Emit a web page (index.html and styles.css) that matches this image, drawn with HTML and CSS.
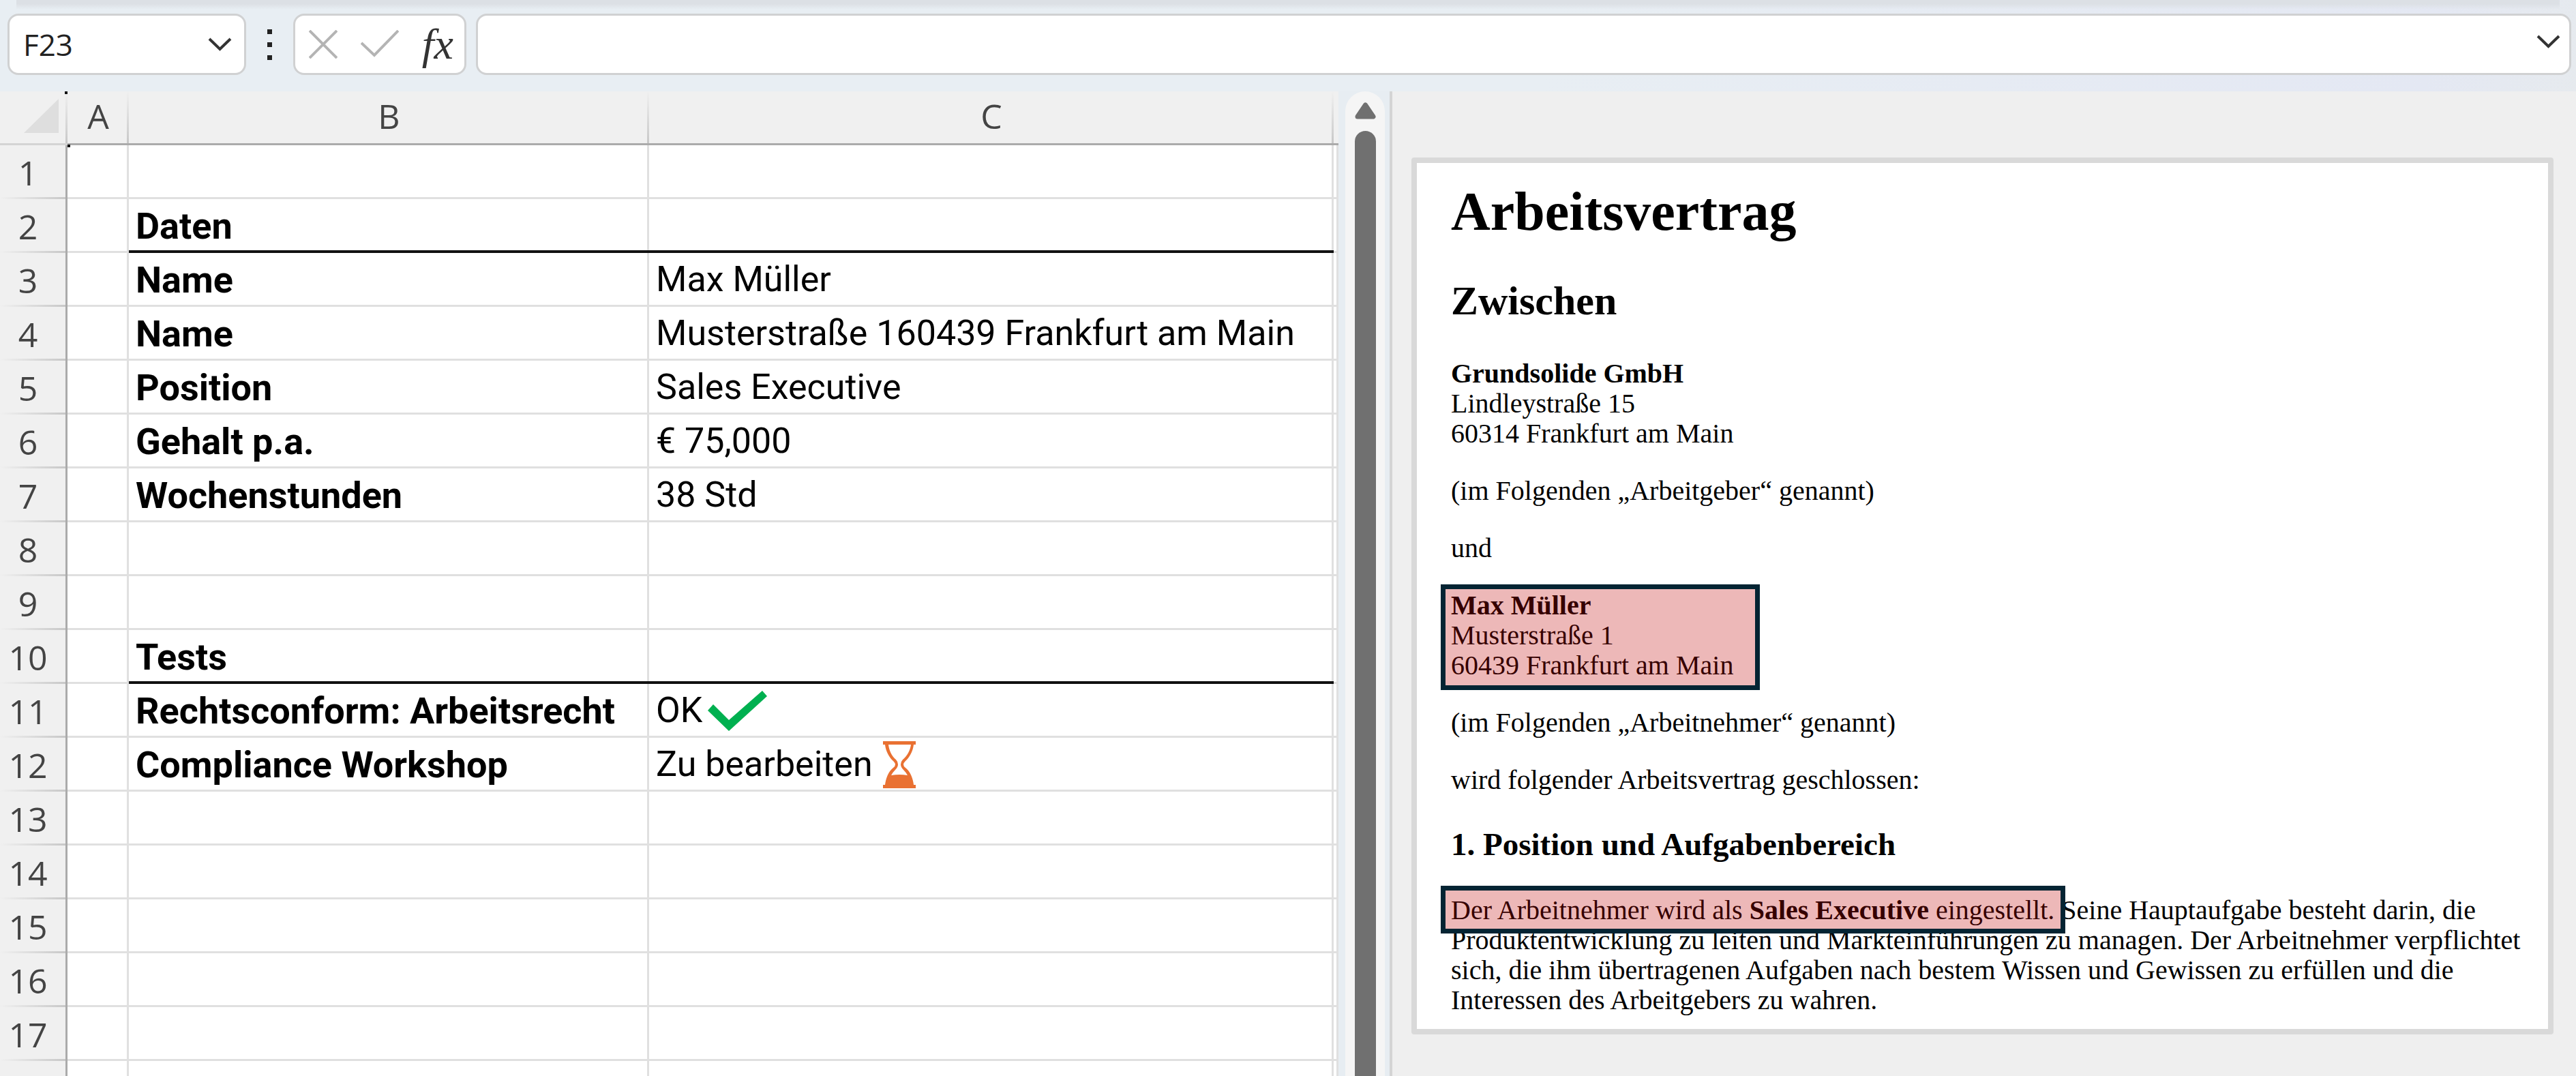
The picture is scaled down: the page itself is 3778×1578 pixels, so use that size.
FILE: index.html
```html
<!DOCTYPE html>
<html lang="de">
<head>
<meta charset="utf-8">
<title>Arbeitsvertrag</title>
<link rel="stylesheet" href="styles.css">
</head>
<body>
<header class="formula-bar">
  <div class="field name-box">
    <input class="name-input" type="text" value="F23" aria-label="Namenfeld">
    <button class="icon-button" type="button" aria-label="Namen anzeigen">
      <svg width="35" height="20" viewBox="0 0 35 20"><path d="M2 2 17.500 17 33 2" fill="none" stroke="#333" stroke-width="4"/></svg>
    </button>
  </div>
  <div class="grip" aria-hidden="true"><i></i><i></i><i></i></div>
  <div class="field actions">
    <button class="icon-button" type="button" aria-label="Abbrechen">
      <svg width="42" height="42" viewBox="0 0 42 42"><path d="M1 1 41 41M41 1 1 41" fill="none" stroke="#b4b4b4" stroke-width="4"/></svg>
    </button>
    <button class="icon-button" type="button" aria-label="Eingeben">
      <svg width="56" height="42" viewBox="0 0 56 42"><path d="M1 19 20 37 55 1" fill="none" stroke="#b4b4b4" stroke-width="4"/></svg>
    </button>
    <button class="icon-button fx" type="button" aria-label="Funktion einfügen">fx</button>
  </div>
  <div class="field formula">
    <input class="formula-input" type="text" aria-label="Bearbeitungsleiste">
    <button class="icon-button expand" type="button" aria-label="Bearbeitungsleiste erweitern">
      <svg width="35" height="20" viewBox="0 0 35 20"><path d="M2 2 17.500 17 33 2" fill="none" stroke="#333" stroke-width="4"/></svg>
    </button>
  </div>
</header>

<main class="workspace">
  <table class="sheet">
    <colgroup><col class="col-head"><col class="col-a"><col class="col-b"><col class="col-c"><col></colgroup>
    <thead>
      <tr>
        <th class="corner"><svg width="51" height="50" viewBox="0 0 51 50"><path d="M51 0V50H0Z" fill="#dedede"/></svg></th>
        <th scope="col">A</th><th scope="col">B</th><th scope="col">C</th><th class="last"></th>
      </tr>
    </thead>
    <tbody>
      <tr><th scope="row">1</th><td></td><td></td><td></td><td></td></tr>
      <tr class="section"><th scope="row">2</th><td></td><td>Daten</td><td></td><td></td></tr>
      <tr><th scope="row">3</th><td></td><td>Name</td><td>Max Müller</td><td></td></tr>
      <tr><th scope="row">4</th><td></td><td>Name</td><td>Musterstraße 160439 Frankfurt am Main</td><td></td></tr>
      <tr><th scope="row">5</th><td></td><td>Position</td><td>Sales Executive</td><td></td></tr>
      <tr><th scope="row">6</th><td></td><td>Gehalt p.a.</td><td>€ 75,000</td><td></td></tr>
      <tr><th scope="row">7</th><td></td><td>Wochenstunden</td><td>38 Std</td><td></td></tr>
      <tr><th scope="row">8</th><td></td><td></td><td></td><td></td></tr>
      <tr><th scope="row">9</th><td></td><td></td><td></td><td></td></tr>
      <tr class="section"><th scope="row">10</th><td></td><td>Tests</td><td></td><td></td></tr>
      <tr><th scope="row">11</th><td></td><td>Rechtsconform: Arbeitsrecht</td><td><div class="status done">OK
        <svg width="87" height="59" viewBox="0 0 87 59" aria-hidden="true"><path d="M0 29 8 20 31 43 80 0 87 8 31 59Z" fill="#00b050"/></svg></div></td><td></td></tr>
      <tr><th scope="row">12</th><td></td><td>Compliance Workshop</td><td><div class="status open">Zu bearbeiten
        <svg width="48" height="69" viewBox="0 0 48 69" aria-hidden="true">
          <path d="M0 0H48V5H45C44 15 38 25 33 29Q30 32 30 34Q30 37 33 39C40 44 44 55 45 64H48V69H0V64H3C4 55 8 44 15 39Q18 37 18 34Q18 32 15 29C10 25 4 15 3 5H0Z" fill="#e97132"/>
          <path d="M8 5H41C40 14 35 22 29 27Q26 30 26 34Q26 38 30 42Q34 46 36 50Q24 48 12 50Q14 46 18 42Q22 38 22 34Q22 30 19 27C13 22 9 14 8 5Z" fill="#fff"/>
        </svg></div></td><td></td></tr>
      <tr><th scope="row">13</th><td></td><td></td><td></td><td></td></tr>
      <tr><th scope="row">14</th><td></td><td></td><td></td><td></td></tr>
      <tr><th scope="row">15</th><td></td><td></td><td></td><td></td></tr>
      <tr><th scope="row">16</th><td></td><td></td><td></td><td></td></tr>
      <tr><th scope="row">17</th><td></td><td></td><td></td><td></td></tr>
      <tr><th scope="row">18</th><td></td><td></td><td></td><td></td></tr>
    </tbody>
  </table>

  <div class="scroll-column">
    <div class="scroll-track">
      <button class="icon-button" type="button" aria-label="Nach oben">
        <svg width="31" height="25" viewBox="0 0 31 25"><path d="M15.500 4 27 21H4Z" fill="#707070" stroke="#707070" stroke-width="7" stroke-linejoin="round"/></svg>
      </button>
      <div class="scroll-thumb"></div>
    </div>
  </div>

  <section class="panel">
    <article class="document">
      <h1>Arbeitsvertrag</h1>
      <h2>Zwischen</h2>
      <p><strong>Grundsolide GmbH</strong><br>Lindleystraße 15<br>60314 Frankfurt am Main</p>
      <p>(im Folgenden „Arbeitgeber“ genannt)</p>
      <p>und</p>
      <p class="marked-block"><strong>Max Müller</strong><br>Musterstraße 1<br>60439 Frankfurt am Main</p>
      <p>(im Folgenden „Arbeitnehmer“ genannt)</p>
      <p>wird folgender Arbeitsvertrag geschlossen:</p>
      <h3>1. Position und Aufgabenbereich</h3>
      <p><span class="marked-text">Der Arbeitnehmer wird als <strong>Sales Executive</strong> eingestellt.</span> Seine Hauptaufgabe besteht darin, die Produktentwicklung zu leiten und Markteinführungen zu managen. Der Arbeitnehmer verpflichtet sich, die ihm übertragenen Aufgaben nach bestem Wissen und Gewissen zu erfüllen und die Interessen des Arbeitgebers zu wahren.</p>
    </article>
  </section>
</main>
</body>
</html>
```
FILE: styles.css
```css
*,
*::before,
*::after { box-sizing: border-box; }

body {
  margin: 0;
  height: 100vh;
  overflow: hidden;
  display: flex;
  flex-direction: column;
  background: #e7edf2;
  font-family: "Open Sans", "Noto Sans", sans-serif;
  color: #000;
}

svg { display: block; flex: none; }

.icon-button {
  display: flex;
  align-items: center;
  justify-content: center;
  flex: none;
  margin: 0;
  padding: 0;
  border: 0;
  background: none;
}

/* Formula bar */
.formula-bar {
  position: relative;
  flex: none;
  display: flex;
  align-items: center;
  height: 134px;
  padding: 20px 7px 24px 11px;
  background: linear-gradient(100deg, #e8eef3 60%, #e4e8f3 94%, #e6eaee);
}

.formula-bar::before {
  content: "";
  position: absolute;
  top: 0;
  left: 24px;
  right: 24px;
  height: 14px;
  background: linear-gradient(#dce0e5 40%, transparent);
}

.field {
  display: flex;
  align-items: center;
  height: 90px;
  border: 3px solid #d0d1d2;
  border-radius: 16px;
  background: #fff;
}

.name-box { width: 350px; padding: 0 18px 0 20px; }

.name-input,
.formula-input {
  flex: 1;
  min-width: 0;
  height: 100%;
  padding: 0;
  border: 0;
  outline: 0;
  background: none;
  font: 44px/60px "Open Sans", "Noto Sans", sans-serif;
  color: #222;
}

.grip {
  display: flex;
  flex-direction: column;
  gap: 12px;
  margin: 0 31px;
}

.grip i { width: 7px; height: 7px; background: #222; }

.actions { width: 254px; padding: 0 16px 0 20px; justify-content: space-between; }

.fx {
  font: italic 64px/64px "Liberation Serif", serif;
  color: #333;
}

.formula { flex: 1; margin-left: 14px; padding: 0 13px 0 20px; }
.expand { align-self: flex-start; padding-top: 28px; }

/* Workspace */
.workspace {
  flex: 1;
  min-height: 0;
  display: grid;
  grid-template-columns: minmax(0, 1963fr) 75px minmax(0, 1740fr);
}

.sheet {
  align-self: start;
  width: 100%;
  table-layout: fixed;
  border-collapse: separate;
  border-spacing: 0;
  background: #fff;
}

.col-head { width: 99px; }
.col-a { width: 90px; }
.col-b { width: 763px; }
.col-c { width: 1004px; }

.sheet tr { height: 79px; }

.sheet th {
  padding: 0;
  background: #f0f0f0;
  font-size: 50px;
  font-weight: 400;
  line-height: 70px;
  color: #444;
}

.sheet thead th {
  padding-bottom: 4px;
  border-bottom: 3px solid #ababab;
  background: linear-gradient(#f0f0f0, #c8c8c8) right / 3px 100% no-repeat #f0f0f0;
}

.sheet thead .last { background: #f0f0f0; }

.sheet .corner {
  position: relative;
  border-bottom-color: #d4d4d4;
}

.corner svg { margin-left: 35px; }

.corner::before,
.corner::after {
  content: "";
  position: absolute;
  width: 4px;
  height: 4px;
  background: #111;
}

.corner::before { top: 0; right: 0; }
.corner::after { bottom: -6px; right: -4px; }

.sheet tbody th {
  padding-right: 14px;
  border-right: 3px solid #ababab;
  background: linear-gradient(90deg, #f0f0f0, #c8c8c8) bottom / 100% 3px no-repeat #f0f0f0;
}

.sheet td {
  padding: 2px 0 0 10px;
  border-bottom: 3px solid #e0e0e0;
  background: linear-gradient(#e0e0e0, #e0e0e0) right / 3px 100% no-repeat;
  font: 52px/70px Roboto, sans-serif;
  white-space: nowrap;
}

.sheet td:nth-child(3) { padding-top: 4px; font-size: 54px; font-weight: 700; }
.sheet .section td:nth-child(3),
.sheet .section td:nth-child(4) { border-bottom: 4px solid #111; }

.status { display: flex; align-items: center; height: 70px; }
.done { gap: 8px; }
.open { gap: 15px; }

/* Scroll bar */
.scroll-column { display: flex; padding-left: 10px; }

.scroll-track {
  width: 58px;
  display: flex;
  flex-direction: column;
  align-items: center;
  gap: 17px;
  padding-top: 16px;
  border-radius: 29px 29px 0 0;
  background: #f5f5f5;
}

.scroll-thumb {
  flex: 1;
  width: 31px;
  border-radius: 16px 16px 0 0;
  background: #707070;
}

/* Document preview */
.panel {
  padding: 97px 33px 0 28px;
  border-left: 4px solid #d4d4d4;
  background: #efefef;
}

.document {
  padding: 27px 34px 20px 50px;
  border: 8px solid #d9d9d9;
  border-radius: 4px;
  background: #fff;
  font: 40px/44px "Liberation Serif", serif;
}

.document h1 { margin: 0 0 54px; font-size: 80px; line-height: 88px; }
.document h2 { margin: 0 0 52px; font-size: 60px; line-height: 66px; }
.document h3 { margin: 46px 0 49px; font-size: 47px; line-height: 52px; }
.document p { margin: 0 0 40px; }
.document p:last-child { margin: 0; }

.marked-block,
.marked-text { position: relative; }

/* Translucent markers laid over the passages taken from the sheet */
.marked-block::after,
.marked-text::after {
  content: "";
  position: absolute;
  border: 7px solid #042433;
  background: rgba(192, 0, 0, 0.28);
  background-clip: padding-box;
}

.marked-block::after { top: -9px; bottom: -14px; left: -15px; width: 468px; }
.marked-text::after { top: -13px; bottom: -12px; left: -15px; right: -16px; }
```
